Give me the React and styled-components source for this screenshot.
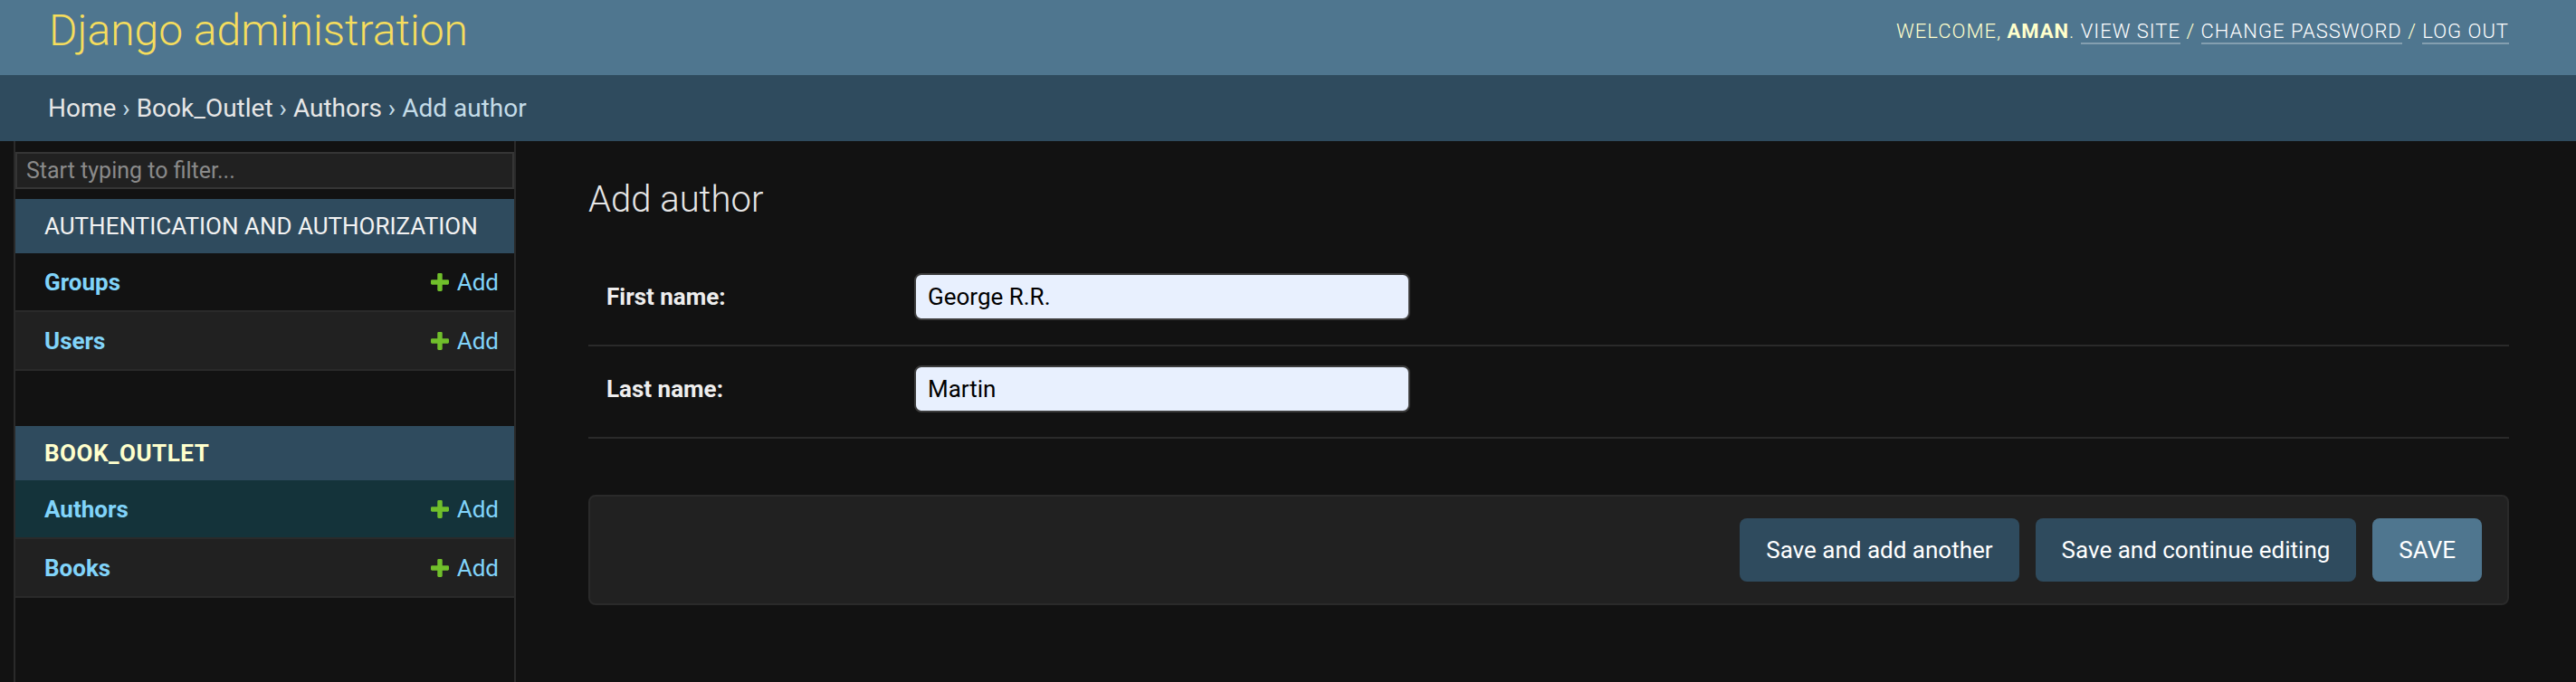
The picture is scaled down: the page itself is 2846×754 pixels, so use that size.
import React from "react";
import styled, { createGlobalStyle } from "styled-components";

const GlobalStyle = createGlobalStyle`
    html, body {
        margin: 0;
        padding: 0;
        background: #121212;
        font-family: Roboto, "Liberation Sans", sans-serif;
        color: #eeeeee;
    }
    * {
        box-sizing: border-box;
    }
`;

const Page = styled.div`
    min-height: 100vh;
    display: flex;
    flex-direction: column;
`;

const Header = styled.div`
    height: 83px;
    display: flex;
    justify-content: space-between;
    align-items: center;
    padding: 0 74px 15px 54px;
    background-color: #4f768f;
`;

const Branding = styled.h1`
    margin: 0;
    font-size: 48px;
    font-weight: 300;
    color: #f5dd5d;
    line-height: 56px;
`;

const UserTools = styled.div`
    font-size: 22px;
    font-weight: 300;
    letter-spacing: 1px;
    text-transform: uppercase;
    color: #ffffcc;
    strong {
        font-weight: 700;
    }
`;

const ToolLink = styled.a`
    color: #ffffff;
    text-decoration: none;
    border-bottom: 2px solid rgba(255, 255, 255, 0.3);
`;

const Breadcrumbs = styled.div`
    height: 73px;
    display: flex;
    align-items: center;
    padding: 0 53px;
    background-color: #2f4b5e;
    font-size: 28px;
    color: #c4dce8;
    a {
        color: #e6e6e6;
        text-decoration: none;
    }
`;

const Main = styled.div`
    flex: 1;
    display: flex;
`;

const ToggleColumn = styled.div`
    width: 17px;
    flex: 0 0 17px;
    border-right: 2px solid #2a2a2a;
`;

const Sidebar = styled.div`
    width: 553px;
    flex: 0 0 553px;
    border-right: 2px solid #2a2a2a;
    padding-top: 12px;
`;

const FilterInput = styled.input`
    display: block;
    width: 100%;
    height: 41px;
    margin: 0 0 11px;
    padding: 0 10px;
    border: 2px solid #353535;
    background-color: #212121;
    font-family: Roboto, "Liberation Sans", sans-serif;
    font-size: 25px;
    color: #eeeeee;
    outline: none;
    &::placeholder {
        color: #8a8a8a;
    }
`;

const Module = styled.div`
    margin-bottom: 61px;
`;

const Caption = styled.div`
    height: 60px;
    display: flex;
    align-items: center;
    padding-left: 32px;
    background-color: #2f4b5e;
    font-size: 26px;
    letter-spacing: ${props => (props.$current ? "0.5px" : "0")};
    text-transform: uppercase;
    color: ${props => (props.$current ? "#ffffcc" : "#f2f2f2")};
    font-weight: ${props => (props.$current ? 700 : 400)};
`;

const rowColors = {
    plain: "#121212",
    alt: "#212121",
    current: "#14333a",
};

const ModelRow = styled.div`
    height: 65px;
    display: flex;
    justify-content: space-between;
    align-items: center;
    padding: 0 17px 0 32px;
    border-bottom: 2px solid #2a2a2a;
    background-color: ${props => rowColors[props.$variant]};
    font-size: 26px;
`;

const ModelName = styled.a`
    font-weight: 700;
    color: #81d4fa;
    text-decoration: none;
`;

const AddLink = styled.a`
    display: flex;
    align-items: center;
    gap: 9px;
    color: #81d4fa;
    text-decoration: none;
`;

const Content = styled.div`
    flex: 1;
    padding: 41px 74px 40px 80px;
`;

const Title = styled.h1`
    margin: 0 0 37px;
    font-size: 40px;
    font-weight: 300;
    line-height: 47px;
    color: #e6e6e6;
`;

const FormRow = styled.div`
    display: flex;
    align-items: center;
    padding: 21px 20px 27px;
    border-bottom: 2px solid #2a2a2a;
`;

const Label = styled.label`
    width: 340px;
    flex: 0 0 340px;
    padding-right: 20px;
    font-size: 26px;
    font-weight: 700;
    color: #eeeeee;
`;

const TextInput = styled.input`
    width: 548px;
    height: 52px;
    padding: 0 13px;
    border: 2px solid #3c3c3c;
    border-radius: 8px;
    background-color: #e8f0fe;
    font-family: Roboto, "Liberation Sans", sans-serif;
    font-size: 26px;
    color: #000000;
    outline: none;
`;

const SubmitRow = styled.div`
    margin-top: 62px;
    display: flex;
    justify-content: flex-end;
    gap: 18px;
    padding: 24px 28px;
    border: 2px solid #2a2a2a;
    border-radius: 8px;
    background-color: #212121;
`;

const Button = styled.button`
    height: 70px;
    padding: 0 29px;
    border: none;
    border-radius: 8px;
    background-color: ${props => (props.$default ? "#4f768f" : "#2f4b5e")};
    font-family: Roboto, "Liberation Sans", sans-serif;
    font-size: 26px;
    color: #ffffff;
    cursor: pointer;
`;

const PlusIcon = () => (
    <svg width="20" height="20" viewBox="192 192 1408 1408">
        <path
            fill="#70bf2b"
            d="M1600 796v192q0 40-28 68t-68 28h-416v416q0 40-28 68t-68 28h-192q-40 0-68-28t-28-68v-416h-416q-40 0-68-28t-28-68v-192q0-40 28-68t68-28h416v-416q0-40 28-68t68-28h192q40 0 68 28t28 68v416h416q40 0 68 28t28 68z"
        />
    </svg>
);

const modules = [
    {
        name: "Authentication and Authorization",
        models: [
            { name: "Groups", variant: "plain" },
            { name: "Users", variant: "alt" },
        ],
    },
    {
        name: "Book_outlet",
        current: true,
        models: [
            { name: "Authors", variant: "current" },
            { name: "Books", variant: "alt" },
        ],
    },
];

const App = () => {
    return (
        <Page>
            <GlobalStyle />
            <Header>
                <Branding>Django administration</Branding>
                <UserTools>
                    Welcome, <strong>aman</strong>. <ToolLink href="#">View site</ToolLink> /{" "}
                    <ToolLink href="#">Change password</ToolLink> / <ToolLink href="#">Log out</ToolLink>
                </UserTools>
            </Header>
            <Breadcrumbs>
                <span>
                    <a href="#">Home</a> › <a href="#">Book_Outlet</a> › <a href="#">Authors</a> › Add author
                </span>
            </Breadcrumbs>
            <Main>
                <ToggleColumn />
                <Sidebar>
                    <FilterInput placeholder="Start typing to filter..." />
                    {modules.map(mod => (
                        <Module key={mod.name}>
                            <Caption $current={mod.current}>{mod.name}</Caption>
                            {mod.models.map(model => (
                                <ModelRow key={model.name} $variant={model.variant}>
                                    <ModelName href="#">{model.name}</ModelName>
                                    <AddLink href="#">
                                        <PlusIcon />
                                        Add
                                    </AddLink>
                                </ModelRow>
                            ))}
                        </Module>
                    ))}
                </Sidebar>
                <Content>
                    <Title>Add author</Title>
                    <FormRow>
                        <Label>First name:</Label>
                        <TextInput defaultValue="George R.R." />
                    </FormRow>
                    <FormRow>
                        <Label>Last name:</Label>
                        <TextInput defaultValue="Martin" />
                    </FormRow>
                    <SubmitRow>
                        <Button>Save and add another</Button>
                        <Button>Save and continue editing</Button>
                        <Button $default>SAVE</Button>
                    </SubmitRow>
                </Content>
            </Main>
        </Page>
    );
};

export default App;
